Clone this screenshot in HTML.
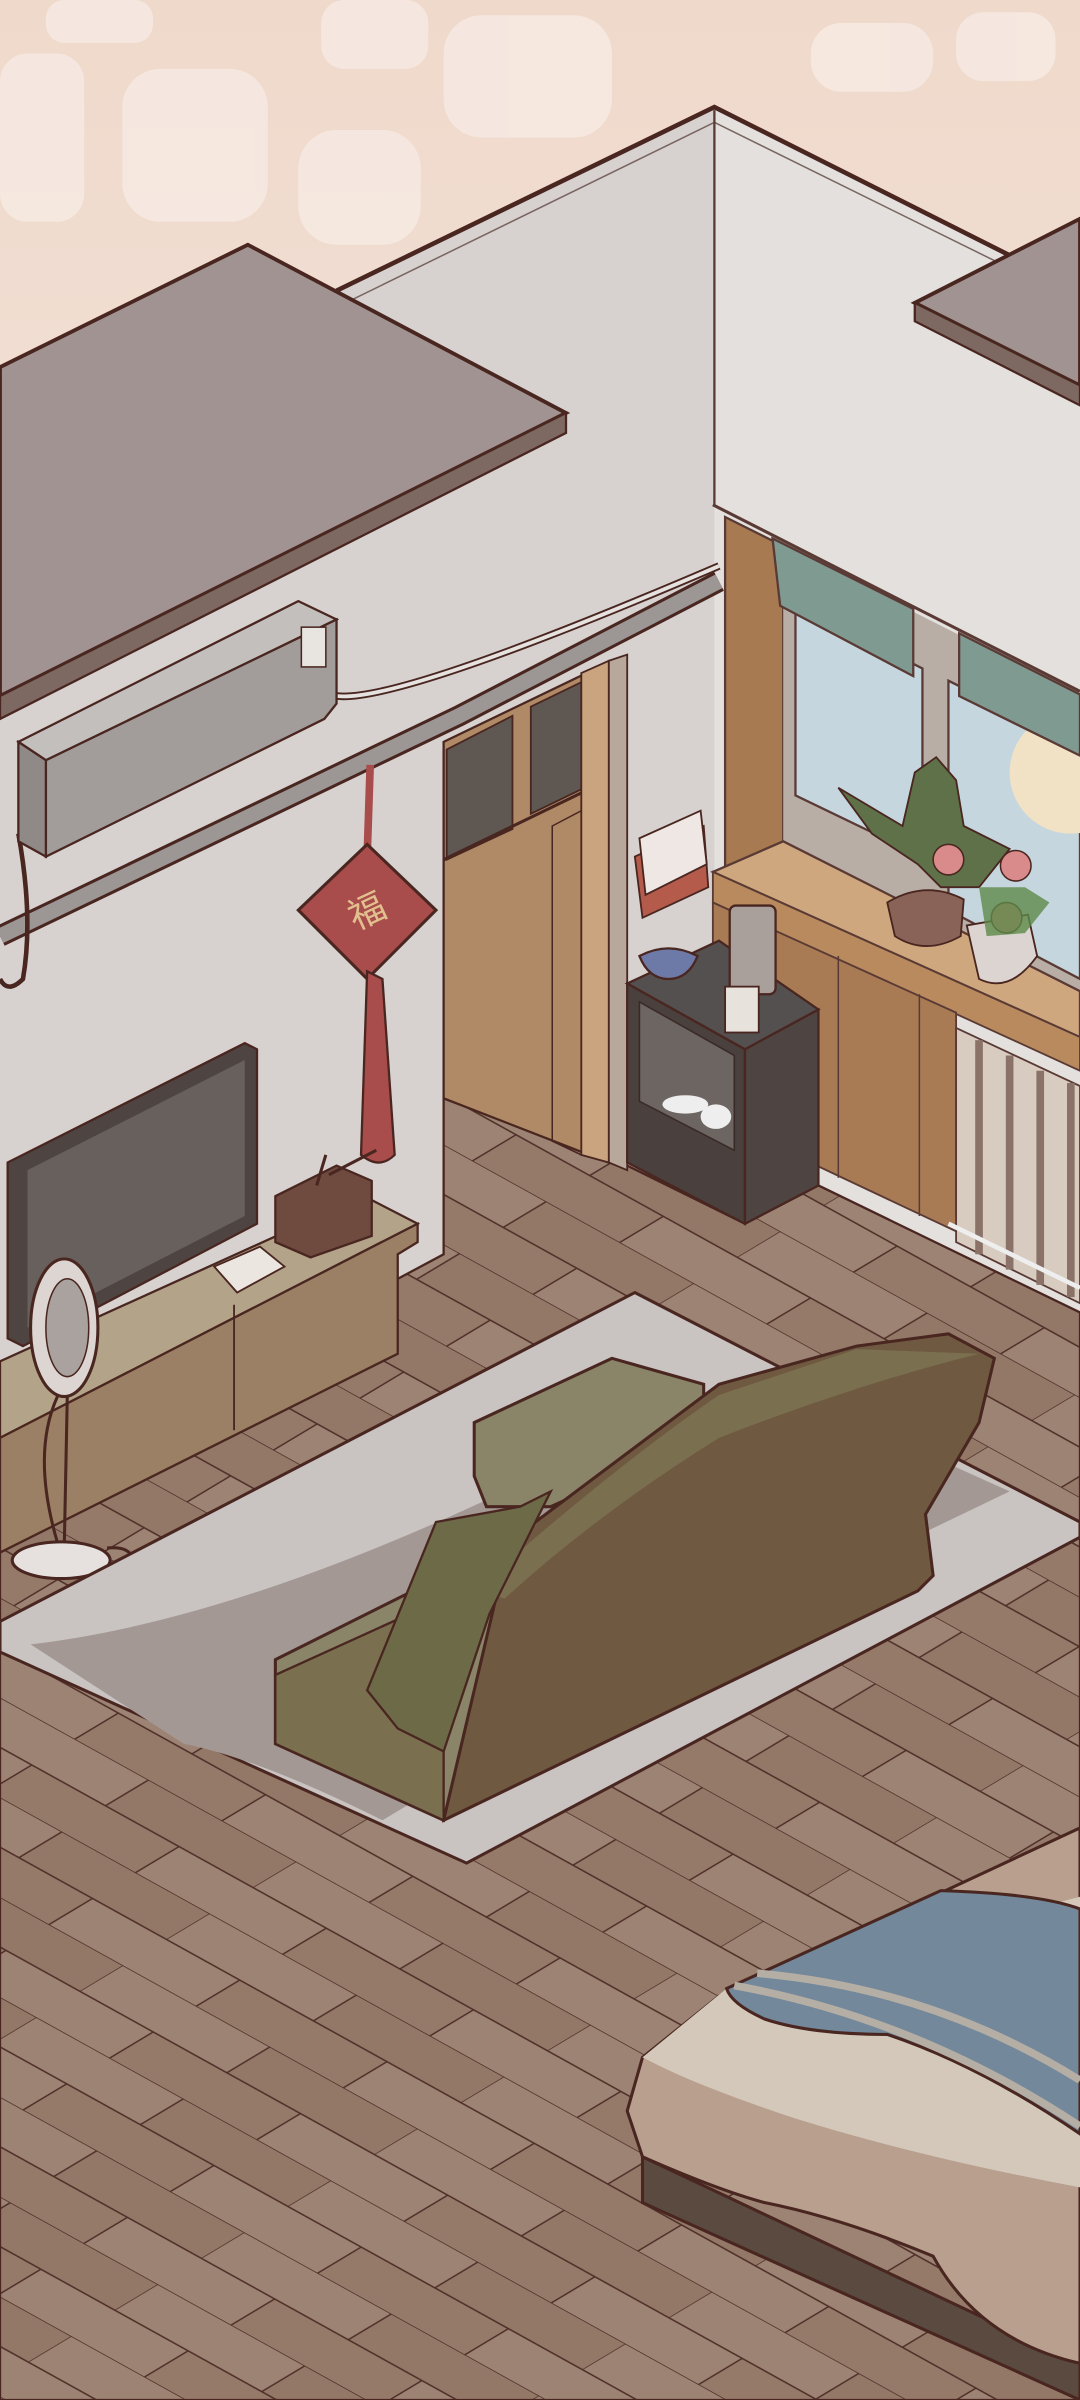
<!DOCTYPE html>
<html><head><meta charset="utf-8"><style>html,body{margin:0;padding:0;width:1080px;height:2400px;overflow:hidden;background:#f3e4da}svg{display:block}</style></head><body>
<svg width="1080" height="2400" viewBox="0 0 706 1569" preserveAspectRatio="none" xmlns="http://www.w3.org/2000/svg">
<defs>
<linearGradient id="sky" x1="0" y1="0" x2="0" y2="1"><stop offset="0" stop-color="#efd9cb"/><stop offset="1" stop-color="#fbf7f5"/></linearGradient>
<pattern id="pl" width="220" height="66" patternUnits="userSpaceOnUse" patternTransform="matrix(0.875 0.485 -0.857 0.514 0 0)">
<rect width="220" height="66" fill="#9c8373"/><rect x="110" y="0" width="110" height="33" fill="#937868"/><rect x="55" y="33" width="110" height="33" fill="#957a6a"/>
<path d="M0 0H220M0 33H220M0 0V33M110 0V33M55 33V66M165 33V66" stroke="#4e2e27" stroke-width="1.1" fill="none"/></pattern>
</defs>
<rect width="706" height="1569" fill="url(#sky)"/>
<g fill="#f7ebe4" opacity=".8"><rect x="0" y="35" width="55" height="110" rx="18"/><rect x="80" y="45" width="95" height="100" rx="25"/><rect x="195" y="85" width="80" height="75" rx="25"/><rect x="290" y="10" width="110" height="80" rx="25"/><rect x="530" y="15" width="80" height="45" rx="20"/><rect x="625" y="8" width="65" height="45" rx="18"/><rect x="30" y="0" width="70" height="28" rx="12"/><rect x="210" y="0" width="70" height="45" rx="15"/></g>
<polygon points="0,300 220,190 467,70 467,800 410,765 290,820 0,975" fill="#d7d2d0"/>
<polygon points="467,70 706,190 706,910 467,790" fill="#e3e0de"/>
<path d="M220,190 L467,70 L706,190" stroke="#4a2620" stroke-width="3" fill="none"/>
<path d="M230,196 L467,80 L706,198" stroke="#7a6560" stroke-width="1" fill="none"/>
<line x1="467" y1="72" x2="467" y2="330" stroke="#5a3a34" stroke-width="1.5"/>
<polygon points="0,975 290,820 290,718 410,762 487,800 535,775 706,858 706,1569 0,1569" fill="url(#pl)" stroke="#4a2620" stroke-width="1.5"/>
<line x1="466" y1="330" x2="706" y2="452" stroke="#5a3a34" stroke-width="2"/>
<polygon points="474,338 512,357 512,570 474,575" fill="#a87a52" stroke="#5a3a34" stroke-width="1.5"/>
<polygon points="512,357 706,455 706,650 512,560" fill="#b9aea6"/>
<polygon points="520,395 603,437 603,560 520,520" fill="#c6d6df" stroke="#5a3a34" stroke-width="1.5"/>
<polygon points="620,445 706,488 706,640 620,595" fill="#c6d6df" stroke="#5a3a34" stroke-width="1.5"/>
<circle cx="700" cy="505" r="40" fill="#f1e2c6"/>
<polygon points="505,352 597,398 597,442 510,396" fill="#7f9a91" stroke="#5a3a34" stroke-width="1.5"/>
<polygon points="627,414 706,454 706,494 627,455" fill="#7f9a91" stroke="#5a3a34" stroke-width="1.5"/>
<polygon points="466,570 512,550 706,648 706,678 " fill="#cfa77f" stroke="#5a3a34" stroke-width="1.5"/>
<polygon points="466,570 706,678 706,700 466,590" fill="#b88a5e" stroke="#5a3a34" stroke-width="1.2"/>
<polygon points="466,590 625,662 625,805 466,730" fill="#a97b54" stroke="#5a3a34" stroke-width="1.2"/>
<line x1="548" y1="625" x2="548" y2="770" stroke="#5a3a34"/>
<line x1="601" y1="650" x2="601" y2="795" stroke="#5a3a34"/>
<polygon points="625,672 706,710 706,852 625,812" fill="#d8cbc0" stroke="#5a3a34" stroke-width="1.2"/>
<g stroke="#8a7268" stroke-width="5"><line x1="640" y1="680" x2="640" y2="820"/><line x1="660" y1="690" x2="660" y2="830"/><line x1="680" y1="700" x2="680" y2="840"/><line x1="700" y1="708" x2="700" y2="848"/></g>
<line x1="620" y1="800" x2="706" y2="842" stroke="#eee" stroke-width="3"/>
<path d="M548,515 L590,540 L598,505 L612,495 L625,510 L630,540 L660,555 L640,580 L615,580 L600,565 L570,545Z" fill="#5e7148" stroke="#4a2620" stroke-width="1.2"/>
<path d="M580,590 Q605,575 630,588 L628,612 Q605,625 585,612Z" fill="#8a6358" stroke="#4a2620" stroke-width="1.2"/>
<path d="M632,605 L672,598 L678,625 Q660,650 640,640Z" fill="#dcd4d0" stroke="#4a2620" stroke-width="1.2"/>
<g fill="#d98b8b" stroke="#4a2620" stroke-width="1"><circle cx="620" cy="562" r="10"/><circle cx="664" cy="566" r="10"/><circle cx="658" cy="600" r="10"/></g>
<path d="M640,580 L670,580 L686,590 L670,610 L645,612Z" fill="#5c8a48" opacity=".8"/>
<polygon points="290,485 398,433 398,760 290,718" fill="#b08a66" stroke="#4a2620" stroke-width="1.5"/>
<polygon points="292,490 335,468 335,542 292,562" fill="#5f5752" stroke="#4a2620" stroke-width="1.2"/>
<polygon points="347,462 380,446 380,516 347,532" fill="#5f5752" stroke="#4a2620" stroke-width="1.2"/>
<line x1="290" y1="562" x2="385" y2="516" stroke="#4a2620" stroke-width="2"/>
<polygon points="361,540 380,530 380,755 361,746" fill="none" stroke="#4a2620"/>
<polygon points="380,440 398,432 398,760 380,755" fill="#c9a47e" stroke="#4a2620" stroke-width="1.2"/>
<polygon points="398,432 410,428 410,765 398,760" fill="#b8a89c" stroke="#4a2620" stroke-width="1.2"/>
<polygon points="415,560 460,540 463,580 420,600" fill="#b55b4c" stroke="#4a2620" stroke-width="1.2"/>
<polygon points="418,548 458,530 462,565 422,585" fill="#efe7e3" stroke="#4a2620" stroke-width="1.2"/>
<polygon points="410,643 470,615 535,660 487,686" fill="#555050" stroke="#4a2620" stroke-width="1.5"/>
<polygon points="410,643 487,686 487,800 410,760" fill="#4a403d" stroke="#4a2620" stroke-width="1.5"/>
<polygon points="487,686 535,660 535,775 487,800" fill="#4e4442" stroke="#4a2620" stroke-width="1.5"/>
<polygon points="418,655 480,690 480,752 418,720" fill="#6d6562" stroke="#3a2a26"/>
<ellipse cx="448" cy="722" rx="15" ry="6" fill="#eee"/><ellipse cx="468" cy="730" rx="10" ry="8" fill="#eee"/>
<path d="M418,625 Q437,615 456,625 Q450,640 437,640 Q424,640 418,625Z" fill="#6d7aa8" stroke="#4a2620" stroke-width="1.5"/>
<rect x="477" y="592" width="30" height="58" rx="4" fill="#a9a09c" stroke="#4a2620" stroke-width="1.5"/>
<rect x="474" y="645" width="22" height="30" fill="#e8e2dc" stroke="#4a2620" stroke-width="1.2"/>
<polygon points="0,240 162,160 370,270 0,455" fill="#a09391" stroke="#4a2620" stroke-width="2.5"/>
<polygon points="370,270 370,283 0,470 0,455" fill="#7e6962" stroke="#4a2620" stroke-width="1.5"/>
<polygon points="598,198 706,143 706,252" fill="#a09391" stroke="#4a2620" stroke-width="2.5"/>
<polygon points="598,198 598,210 706,265 706,252" fill="#7e6962" stroke="#4a2620" stroke-width="1.5"/>
<path d="M0,612 L300,468 L470,380" stroke="#4a2620" stroke-width="14" fill="none"/>
<path d="M0,612 L300,468 L470,380" stroke="#9c9795" stroke-width="10" fill="none"/>
<path d="M220,455 Q260,460 470,370" stroke="#4a2620" stroke-width="5" fill="none"/>
<path d="M220,455 Q260,460 470,370" stroke="#e6e2e0" stroke-width="2.5" fill="none"/>
<path d="M12,545 Q22,600 15,640 Q5,650 0,640" stroke="#4a2620" stroke-width="3" fill="none"/>
<polygon points="12,485 195,393 220,405 30,497" fill="#c3bfbd" stroke="#4a2620" stroke-width="1.5"/>
<polygon points="30,497 220,405 220,460 212,470 30,560" fill="#a29d9a" stroke="#4a2620" stroke-width="1.5"/>
<polygon points="12,485 30,497 30,560 12,550" fill="#8f8a87" stroke="#4a2620" stroke-width="1.5"/>
<rect x="197" y="410" width="16" height="26" fill="#e8e4e0" stroke="#4a2620"/>
<line x1="242" y1="500" x2="240" y2="560" stroke="#a84c4c" stroke-width="5"/>
<polygon points="240,552 285,595 240,640 195,595" fill="#a84c4c" stroke="#4a2620" stroke-width="2"/>
<text x="240" y="604" font-family="'Liberation Sans','Noto Sans CJK SC',sans-serif" font-size="24" fill="#e2c08e" text-anchor="middle" transform="rotate(-25 240 596)">福</text>
<path d="M240,635 L250,640 L258,755 Q248,765 236,755Z" fill="#a84c4c" stroke="#4a2620" stroke-width="1.5"/>
<polygon points="5,760 160,682 168,686 168,800 15,880 5,875" fill="#4e4542" stroke="#4a2620" stroke-width="1.5"/>
<polygon points="18,765 160,693 160,795 18,868" fill="#68605c"/>
<polygon points="0,890 238,782 273,800 0,940" fill="#b3a389" stroke="#4a2620" stroke-width="1.5"/>
<polygon points="0,940 273,800 273,812 260,820 260,885 0,1015" fill="#9c8065" stroke="#4a2620" stroke-width="1.5"/>
<line x1="153" y1="853" x2="153" y2="935" stroke="#4a2620" stroke-width="1.2"/>
<polygon points="180,782 220,762 243,772 243,808 203,822 180,812" fill="#6e4a3f" stroke="#4a2620" stroke-width="1.5"/>
<path d="M207,775 L213,755 M215,768 L246,752" stroke="#4a2620" stroke-width="2"/>
<polygon points="140,828 170,815 186,828 155,845" fill="#ece6e0" stroke="#4a2620" stroke-width="1.2"/>
<ellipse cx="42" cy="868" rx="22" ry="45" fill="#dcd5d2" stroke="#4a2620" stroke-width="2"/>
<ellipse cx="44" cy="868" rx="14" ry="32" fill="#aaa29f" stroke="#4a2620"/>
<path d="M38,912 Q20,950 38,1010 M44,912 L42,1012" stroke="#4a2620" stroke-width="2" fill="none"/>
<ellipse cx="40" cy="1020" rx="32" ry="12" fill="#e6e1df" stroke="#4a2620" stroke-width="2"/>
<path d="M70,1012 Q92,1010 86,1030" stroke="#4a2620" stroke-width="2" fill="none"/>
<polygon points="0,1060 415,845 706,995 706,1005 305,1218 0,1080" fill="#c9c3c1" stroke="#4a2620" stroke-width="2"/>
<path d="M20,1075 Q150,1060 330,975 L560,930 L660,975 L400,1100 L250,1190 Q170,1150 120,1140 Z" fill="#a39893"/>
<polygon points="310,930 400,888 460,905 460,940 360,985 318,985 310,965" fill="#8a8468" stroke="#4a2620" stroke-width="2"/>
<polygon points="290,1035 330,1010 470,905 560,880 620,872 650,888 640,930 605,990 610,1030 600,1040 290,1190" fill="#6f5a41" stroke="#4a2620" stroke-width="2"/>
<path d="M310,1040 Q400,960 470,912 L560,882 L640,885 Q560,905 470,940 Q390,990 330,1045Z" fill="#7a6f4f"/>
<polygon points="180,1085 290,1030 330,1020 290,1190 180,1140" fill="#8a8468" stroke="#4a2620" stroke-width="2"/>
<polygon points="180,1095 290,1045 290,1190 180,1140" fill="#7a7050" stroke="#4a2620" stroke-width="1.5"/>
<path d="M240,1105 L285,995 L340,985 L360,975 L320,1055 L290,1145 L260,1130 Z" fill="#6d6a48" stroke="#4a2620" stroke-width="1.5"/>
<polygon points="420,1410 706,1545 706,1569 420,1440" fill="#5a4a40" stroke="#4a2620" stroke-width="2"/>
<path d="M470,1305 L706,1195 L706,1545 Q640,1530 610,1475 Q550,1450 500,1440 Q470,1432 420,1410 L410,1380 L420,1345Z" fill="#b9a08e" stroke="#4a2620" stroke-width="2"/>
<path d="M420,1345 L475,1300 L706,1240 L706,1430 Q600,1410 520,1385 Q460,1365 430,1350Z" fill="#d4c8bb"/>
<path d="M475,1300 L615,1236 Q680,1238 706,1248 L706,1395 Q640,1350 580,1330 Q530,1330 500,1320 Q478,1310 475,1300Z" fill="#73889a" stroke="#4a2620" stroke-width="2"/>
<path d="M480,1298 Q600,1320 706,1390 M495,1290 Q610,1300 706,1360" stroke="#b5aea5" stroke-width="5" fill="none"/>
</svg>
</body></html>
